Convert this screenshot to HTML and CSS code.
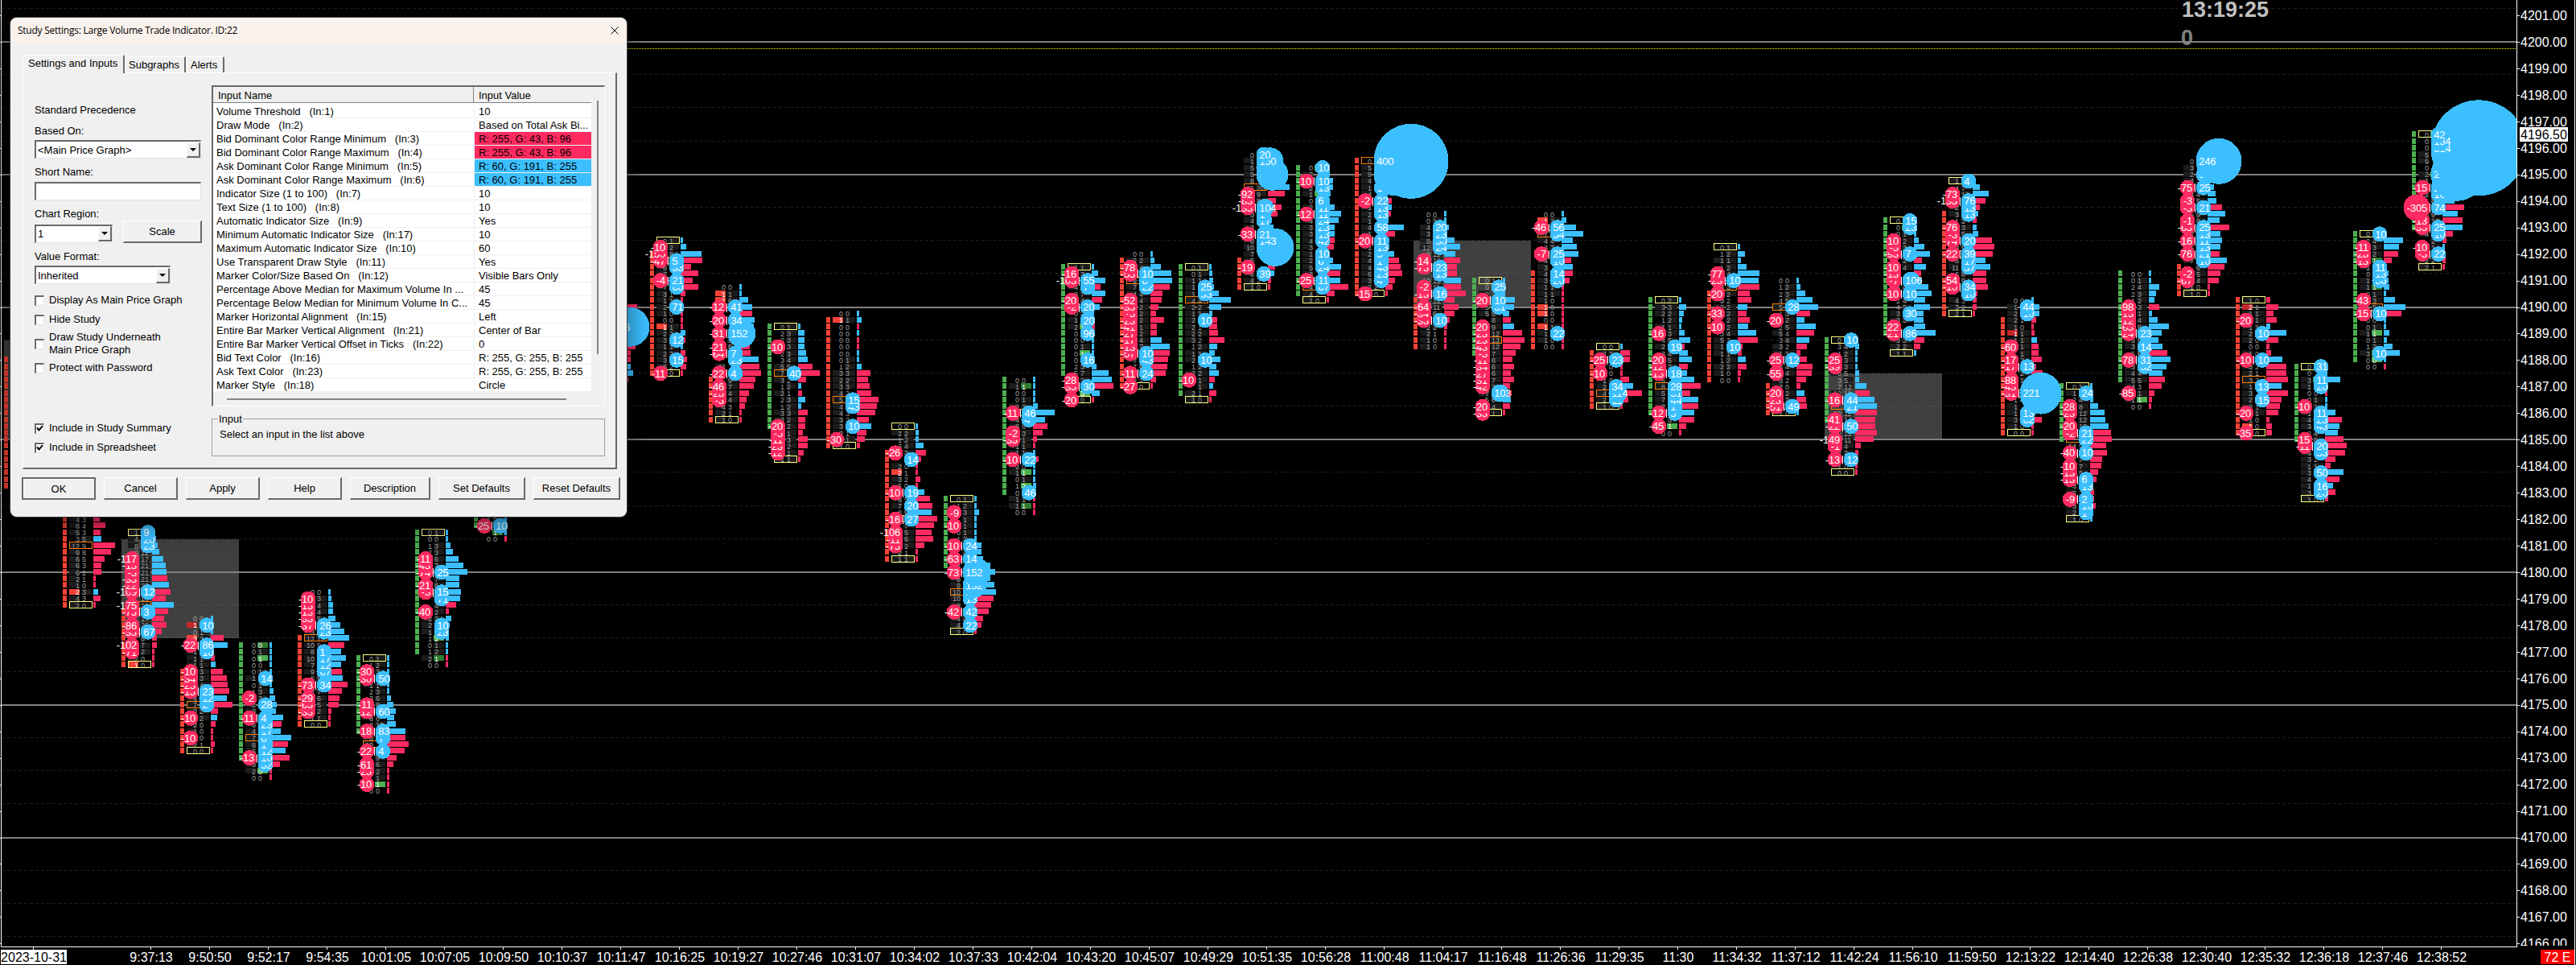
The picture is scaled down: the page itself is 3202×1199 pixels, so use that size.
FILE: index.html
```html
<!DOCTYPE html>
<html lang="en">
<head>
    <meta charset="UTF-8">
    <meta name="viewport" content="width=device-width, initial-scale=1.0">
    <title>Large Volume Trade Indicator</title>
    <link rel="stylesheet" href="styles.css">
</head>
<body>
    <svg id="chart" class="chart" width="3202" height="1199" viewBox="0 0 3202 1199"></svg>

    <div class="dialog">
        <div class="titlebar">
            <span class="dialog-title">Study Settings: Large Volume Trade Indicator. ID:22</span>
            <svg class="close" width="12" height="12" viewBox="0 0 12 12"><path d="M1.5 1.5l9 9M10.5 1.5l-9 9"/></svg>
        </div>

        <div class="tabs">
            <div class="tab active">Settings and Inputs</div>
            <div class="tab subgraphs">Subgraphs</div>
            <div class="tab alerts">Alerts</div>
        </div>

        <div class="panel">
            <div class="options">
                <div class="label">Standard Precedence</div>
                <div class="label based">Based On:</div>
                <div class="select wide"><span>&lt;Main Price Graph&gt;</span><i class="arrow"></i></div>
                <div class="label name">Short Name:</div>
                <div class="select wide"></div>
                <div class="label">Chart Region:</div>
                <div class="region">
                    <div class="select small"><span>1</span><i class="arrow"></i></div>
                    <div class="btn scale">Scale</div>
                </div>
                <div class="label format">Value Format:</div>
                <div class="select medium"><span>Inherited</span><i class="arrow"></i></div>
                <div class="checks">
                    <div class="check"><i class="box"></i>Display As Main Price Graph</div>
                    <div class="check"><i class="box"></i>Hide Study</div>
                    <div class="check tall"><i class="box"></i><span>Draw Study Underneath<br>Main Price Graph</span></div>
                    <div class="check"><i class="box"></i>Protect with Password</div>
                </div>
                <div class="checks bottom">
                    <div class="check"><i class="box"><svg width="9" height="9" viewBox="0 0 9 9"><path d="M1 3.5l2.5 3L8 1.2"/></svg></i>Include in Study Summary</div>
                    <div class="check"><i class="box"><svg width="9" height="9" viewBox="0 0 9 9"><path d="M1 3.5l2.5 3L8 1.2"/></svg></i>Include in Spreadsheet</div>
                </div>
            </div>

            <div class="inputs">
                <div class="list">
                    <div class="list-main">
                        <div class="list-head"><span>Input Name</span><span>Input Value</span></div>
                        <div class="list-body" id="inputs"></div>
                        <div class="hscroll"></div>
                    </div>
                    <div class="vscroll"></div>
                </div>
                <fieldset class="group">
                    <legend>Input</legend>
                    Select an input in the list above
                </fieldset>
            </div>
        </div>

        <div class="buttons">
            <div class="btn default">OK</div>
            <div class="btn">Cancel</div>
            <div class="btn">Apply</div>
            <div class="btn">Help</div>
            <div class="btn desc">Description</div>
            <div class="btn long">Set Defaults</div>
            <div class="btn long">Reset Defaults</div>
        </div>
    </div>

    <script src="chart.js"></script>
</body>
</html>
```

FILE: styles.css
```css
* {
    margin: 0;
    padding: 0;
    box-sizing: border-box;
}

body {
    background: #000;
    width: 3202px;
    height: 1199px;
    overflow: hidden;
    position: relative;
    font-family: 'Liberation Sans', Arial, sans-serif;
    font-size: 13px;
    color: #000;
}

/* chart */
.chart {
    display: block;
    shape-rendering: crispEdges;
}

.chart text {
    font-family: 'Liberation Sans', Arial, sans-serif;
}

.grid-major { stroke: #808080; stroke-width: 2; }
.grid-minor { stroke: #1e1e1e; stroke-width: 1; stroke-dasharray: 4 3; }
.grid-level { stroke: #ffff00; stroke-width: 1; stroke-dasharray: 1 1; }
.axis { stroke: #fff; stroke-width: 1; }
.session { fill: #808080; fill-opacity: 0.5; }

.axis-text { font-size: 16px; fill: #fff; }
.axis-text.dark { fill: #000; }
.axis-text.mid { text-anchor: middle; }

.clock { font-size: 27px; font-weight: bold; fill: #c0c0c0; }
.clock.count { fill: #808080; }

.up { fill: #4caf50; }
.down { fill: #f44336; }
.up-dark { fill: #2e7d32; }
.down-dark { fill: #c62828; }
.bid { fill: #ff2b60; }
.ask { fill: #3cbfff; }
.cell { fill: #1c1c1c; }
.high-low { fill: none; stroke: #ffff80; stroke-width: 1; }
.poc { fill: none; stroke: #ff8000; stroke-width: 1; }
.split { fill: #fff; }

.cell-text { font-size: 9px; fill: #a0a0a0; }
.cell-text.hot { fill: #fff; }
.mark-text { font-size: 13px; letter-spacing: -0.2px; fill: #fff; }
.end { text-anchor: end; }

/* study settings window */
.dialog {
    position: absolute;
    left: 13px;
    top: 22px;
    width: 766px;
    height: 620px;
    background: #f0f0f0;
    border-radius: 8px;
    overflow: hidden;
    box-shadow: 0 8px 32px rgba(0, 0, 0, 0.55), 0 0 0 1px #555;
}

.titlebar {
    height: 31px;
    background: #f9f1ec;
    display: flex;
    justify-content: space-between;
    align-items: center;
    padding: 0 9px;
}

.dialog-title {
    font-family: 'Open Sans', 'Noto Sans', sans-serif;
    font-size: 12px;
    letter-spacing: -0.25px;
    white-space: nowrap;
}

.close path {
    fill: none;
    stroke: #000;
    stroke-width: 1;
}

.tabs {
    display: flex;
    align-items: flex-end;
    height: 37px;
    padding-left: 15px;
}

.tab {
    height: 20px;
    padding: 2px 0 0 4px;
    border-top: 1px solid #fff;
    border-left: 1px solid #fff;
    border-right: 2px solid #696969;
    border-radius: 2px 2px 0 0;
    margin-right: 1px;
    white-space: nowrap;
}

.tab.active {
    height: 23px;
    width: 127px;
    padding-left: 6px;
    margin-bottom: -1px;
    margin-right: 0;
    background: #f0f0f0;
}

.subgraphs { width: 76px; }
.alerts { width: 47px; }

.panel {
    display: flex;
    height: 493px;
    margin: 0 12px 0 15px;
    border-top: 1px solid #fff;
    border-left: 1px solid #fff;
    border-right: 2px solid #696969;
    border-bottom: 2px solid #696969;
}

.options {
    width: 234px;
    padding: 38px 0 0 14px;
}

.label {
    height: 16px;
    line-height: 16px;
}

.label.based { margin: 10px 0 3px; }
.label.name { margin-bottom: 4px; }
.label.format { margin: 9px 0 3px; }
.select + .label { margin-top: 9px; }

.select {
    height: 23px;
    background: #fff;
    border: 1px solid #a0a0a0;
    border-top: 2px solid #696969;
    border-left: 2px solid #696969;
    border-right-color: #e3e3e3;
    border-bottom-color: #e3e3e3;
    display: flex;
    justify-content: space-between;
    align-items: center;
    padding-left: 2px;
}

.wide { width: 207px; }
.small { width: 97px; }
.medium { width: 169px; }

.arrow {
    width: 17px;
    height: 19px;
    background: #f0f0f0;
    border: 1px solid #fff;
    border-right: 2px solid #696969;
    border-bottom: 2px solid #696969;
    display: flex;
    align-items: center;
    justify-content: center;
}

.arrow::after {
    content: '';
    border: 4px solid transparent;
    border-top-color: #000;
    border-bottom: 0;
}

.region {
    display: flex;
    align-items: center;
    gap: 13px;
    height: 28px;
}

.region .select { margin-top: 4px; }

.btn {
    width: 92px;
    height: 28px;
    display: flex;
    align-items: center;
    justify-content: center;
    border: 1px solid #fff;
    border-right: 2px solid #696969;
    border-bottom: 2px solid #696969;
    white-space: nowrap;
}

.scale { width: 98px; }

.checks {
    display: flex;
    flex-direction: column;
    padding-top: 8px;
}

.check {
    display: flex;
    align-items: center;
    gap: 6px;
    height: 24px;
    line-height: 16px;
}

.check.tall { height: 36px; }
.checks.bottom { padding-top: 51px; }

.box {
    width: 12px;
    height: 13px;
    background: #fff;
    border: 1px solid #e3e3e3;
    border-top: 2px solid #696969;
    border-left: 2px solid #696969;
    display: flex;
    align-items: center;
    justify-content: center;
}

.box path {
    fill: none;
    stroke: #000;
    stroke-width: 2;
}

.inputs {
    width: 489px;
    padding-top: 15px;
}

.list {
    display: flex;
    height: 399px;
    border-top: 2px solid #696969;
    border-left: 2px solid #696969;
    border-right: 1px solid #fff;
    border-bottom: 1px solid #fff;
}

.list-main { width: 470px; }

.list-head,
.list-row {
    display: grid;
    grid-template-columns: 324px 146px;
}

.list-head {
    height: 20px;
    line-height: 21px;
    border-bottom: 1px solid #808080;
}

.list-head span { padding-left: 6px; }

.list-head span:first-child {
    height: 19px;
    border-right: 1px solid #808080;
}

.list-body {
    background: #fff;
    padding-top: 2px;
}

.list-row {
    height: 17px;
    line-height: 17px;
    border-bottom: 1px solid #f0f0f0;
    white-space: pre;
}

.list-row span {
    height: 16px;
    padding-left: 4px;
    overflow: hidden;
    text-overflow: ellipsis;
}

.list-row span:last-child {
    padding-left: 5px;
    border-left: 1px solid #f0f0f0;
}

.list-row .bid-color { background: #ff2b60; }
.list-row .ask-color { background: #3cbfff; }

.hscroll {
    width: 422px;
    height: 2px;
    background: #858585;
    margin: 8px 0 0 17px;
}

.vscroll {
    width: 2px;
    height: 315px;
    background: #858585;
    margin: 17px 0 0 7px;
}

.group {
    height: 54px;
    margin-top: 8px;
    border: 1px solid #a0a0a0;
    padding: 4px 0 0 9px;
}

.group legend {
    margin-left: -2px;
    padding: 0 1px;
}

.buttons {
    display: flex;
    gap: 10px;
    padding: 10px 0 0 14px;
}

.default {
    border: 2px solid #696969;
    box-shadow: inset 1px 1px #fff;
}

.desc { width: 100px; }
.long { width: 108px; }
```

FILE: chart.js
```js
// y of a tick row: row 0 is 4200.00, one row is 0.25
const ROW = 8.2375;
const yOf = row => 52 + row * ROW;
const xOf = k => 188 + 73 * k;

const svg = document.getElementById('chart');
const out = [];

function rect(x, y, w, h, cls) {
    out.push(`<rect x="${x}" y="${y}" width="${w}" height="${h}" class="${cls}"/>`);
}

function line(x1, y1, x2, y2, cls) {
    out.push(`<line x1="${x1}" y1="${y1}" x2="${x2}" y2="${y2}" class="${cls}"/>`);
}

function text(x, y, str, cls) {
    out.push(`<text x="${x}" y="${y}" class="${cls}">${str}</text>`);
}

const times = ['9:37:13', '9:50:50', '9:52:17', '9:54:35', '10:01:05', '10:07:05', '10:09:50', '10:10:37',
    '10:11:47', '10:16:25', '10:19:27', '10:27:46', '10:31:07', '10:34:02', '10:37:33', '10:42:04',
    '10:43:20', '10:45:07', '10:49:29', '10:51:35', '10:56:28', '11:00:48', '11:04:17', '11:16:48',
    '11:26:36', '11:29:35', '11:30', '11:34:32', '11:37:12', '11:42:24', '11:56:10', '11:59:50',
    '12:13:22', '12:14:40', '12:26:38', '12:30:40', '12:35:32', '12:36:18', '12:37:46', '12:38:52'];

// cells: "bid,ask" per row, R/r = red / dark red bid, G/g = green / dark green ask
// hist: b = ask dominant, r = bid dominant, width in px
// bids, asks: row:volume[:diameter]
const bars = [
    { k: -2, top: 48, stripe: ['down', 48, 67], cells: '', hist: '' },
    { k: -1, top: 71, stripe: ['down', 70, 85], orange: [76], yellow: [85],
      cells: '5,4 4,3 8,4 5,3 3,5 12,9 9,8 6,5 6,3 6,2 2,1 1,0 2,3R 4,3 2,0',
      hist: 'r9 r8 r15 r9 b10 r27 r22 r14 r10 r10 r3 r3 b6 r9 r3' },
    { k: 0, top: 74, stripe: ['down', 86, 94], orange: [85], yellow: [74, 94],
      cells: '1, 4, 8, 9,12 ,17 ,21 ,21 ,21 ,25 ,19 ,18 ,20 ,16 ,17 ,20 ,9 ,5 ,7 ,2 2,0 1,0R',
      hist: 'b4 b5 b7 b9 b14 b17 b18 r19 b21 r23 r17 b27 r20 r15 r18 r12 r6 r6 r3 r3 r3',
      bids: '78:117 79:13 80:3 81:33 82:22 83:109 85:175 86:73 88:86 89:33 91:102 92:71',
      asks: '74:9 75:20 76:23 83:12 86:3 89:67' },
    { k: 1, top: 87, stripe: ['down', 95, 107], orange: [100], yellow: [107],
      cells: '0,0 1,r 0,1 3,3R , 1, 1,1 1,1 ,3 ,3 ,4 4, 4, 7, 2,2 ,2 2,0 1,0 ,0 2,1 0,0',
      hist: 'b3 b3 b3 r16 b21 b4 r5 b6 r15 r20 r21 r23 b20 r27 r9 b8 r6 r3 r3 r5 r3',
      bids: '91:22 95:10 96:34 97:23 98:13 102:10 105:10',
      asks: '88:10 91:86 92:10 98:23 99:12 100:2' },
    { k: 2, top: 91, stripe: ['up', 91, 108], orange: [105], yellow: [],
      cells: '0,0g 0,1 0,1G 0,0 0,1 1, 0,1 1,3 ,3 2, 3, 5, 6, 4, 7, 8, 6, 7, 3, 2,0G 0,0',
      hist: 'b3 b3 b3 b3 b3 b3 b3 b5 b7 b9 b8 b17 r15 b14 b27 r23 b20 r25 r13 r3 r3',
      bids: '99:2 102:11 108:13',
      asks: '96:14 100:28 102:4 103:23 104:17 105:6 106:1 107:12 108:10 109:32' },
    { k: 3, top: 83, stripe: ['down', 90, 103], orange: [90], yellow: [103],
      cells: '0,0 ,3 ,4 ,4 ,5 , 3, 12,12 10,9 8, 10, 7, 9, 8,9 , 7,7 ,6 ,5 ,2 1,1 0,0',
      hist: 'b3 b4 b6 b6 b9 b15 b20 b26 r20 b16 b22 b16 r17 b18 r24 r17 r14 r13 r4 r3 r3',
      bids: '84:10 85:13 86:13 87:33 88:37 97:73 99:29 100:63 101:33',
      asks: '88:26 89:23 92:1 93:17 94:12 95:67 97:34' },
    { k: 4, top: 93, stripe: ['up', 93, 104], orange: [106], yellow: [93],
      cells: '0,1 1,2 ,3 ,2 1,1 2,3 3,6 ,8 ,7 8,6 8,10 ,9 3, 10, ,9 ,9 ,6 ,2 ,1 ,1G 0,0',
      hist: 'b3 b3 b3 b3 b3 b3 b5 b8 b11 b9 b11 b23 r23 r27 r22 r12 r8 r3 r3 r3 r3',
      bids: '95:30 96:30 100:11 101:12 104:18 107:22 109:61 110:23 112:10',
      asks: '96:50 101:60 104:83 105:7 107:4' },
    { k: 5, top: 74, stripe: ['up', 74, 92], orange: [], yellow: [74],
      cells: '0,1 0,0 1,3 2,3 ,6 ,7 , ,7 ,6 ,7 ,6 ,4 ,2 2,2 2, 1, 1,2G 0,1 1,2 2,1g 0,0',
      hist: 'b3 b3 b6 b9 b16 b22 b27 b17 b17 b19 b18 r13 r4 b7 b5 b4 b4 b3 b3 r3 r3',
      bids: '78:11 79:43 80:74 82:21 83:3 86:40',
      asks: '80:25 83:15 84:71 88:10 89:23' },
    { k: 6, top: 71, stripe: ['up', 71, 73],
      cells: '1,1 1,2 , ,1g 0,0', hist: 'b3 b3 b3 b3 r3', bids: '73:25', asks: '73:10' },
    { k: 8, top: 40, cells: '', hist: 'r19 b18 b18 b18 b18 b18 r17 r11 r11 b11 b14 r8', asks: '43:156:49' },
    { k: 9, top: 30, stripe: ['down', 32, 50], orange: [33], yellow: [30, 50],
      cells: '0,1 ,2 ,8 , 8,7 7, , 7,7 3,1 1,1 2, 1,0 0,0 1,1R 2,2 3, 1,1 2,2 3, 8,2 ,0',
      hist: 'b3 b7 b26 r27 r13 r22 r15 r22 r6 r3 r3 r3 r3 r3 b6 r6 b3 r6 r8 r7 r3',
      bids: '31:10 32:150 33:47 36:4 50:11',
      asks: '33:5 34:33 36:21 37:60 40:71 45:12 48:15' },
    { k: 10, top: 37, stripe: ['down', 51, 57], orange: [], yellow: [57],
      cells: '0,0 1,1R 1,6R , , , , , ,9 ,8 , , 11, , ,9 ,7 ,4 ,4 4,3 2,1 1,0',
      hist: 'b3 b3 b11 b16 r16 b19 b18 b17 r14 r13 r14 b24 r25 r27 r20 r18 r12 r9 r7 r3 r3',
      bids: '40:12 42:20 44:31 46:21 47:64 50:22 52:46 53:28 54:3',
      asks: '40:41 42:34 44:152:35 47:7 48:23 50:4' },
    { k: 11, top: 43, stripe: ['up', 43, 58], orange: [50], yellow: [43, 63],
      cells: '0,1 2,3 2,3 ,3 2,3 3,4 5,5 7, 3,2 1,2 2,1 2,3 1,2 3,3 2,2 ,2 ,1 ,3 ,2 ,1 1,1',
      hist: 'b3 b8 b8 b8 b10 b12 r18 r27 r10 b4 r5 b9 b4 r12 r9 r9 r6 r12 r12 r7 r3',
      bids: '46:10 58:20 59:5 60:11 61:23 62:12', asks: '50:40' },
    { k: 12, top: 41, stripe: ['down', 42, 61], orange: [54], yellow: [61],
      cells: '0,0 1,1R 0,0 0,0 0,0 0,0 0,0 0,1 1,2 3,3 2,2 3,3 4,2 5, 4, 4,3 3,2 3, 2,1 ,1 1,0',
      hist: 'b3 b6 r3 b3 r3 r3 b3 b3 b6 r17 r14 r16 r18 r27 r25 r23 r15 b18 r12 r10 r4',
      bids: '60:30', asks: '54:15 55:43 58:10' },
    { k: 13, top: 58, stripe: ['down', 62, 78], orange: [72], yellow: [58, 78],
      cells: '0,0 2,2 1,2 3,4 ,3 , 2,0 2,1R 3,2 1,0 , 8,5 7, 8,9 , ,7 ,5 ,6 ,2 2,1 1,1',
      hist: 'b3 b4 b4 b10 r13 r7 r3 r3 r6 r3 b11 r18 r21 b20 r27 r23 r20 r22 r11 r3 r3',
      bids: '62:26 68:10 72:16 74:106 75:11 76:73', asks: '63:14 68:19 70:20 72:27' },
    { k: 14, top: 69, stripe: ['up', 69, 79], orange: [83], yellow: [69, 89],
      cells: '0,1 1,2 ,3 ,1 ,1 0,1 1,2 , ,4 , 4, 7, 8, 9, 10, 10, 8, , 4,4 4,2 2,0',
      hist: 'b3 b3 b6 b3 b3 b3 b3 b9 b9 b11 b20 b26 b20 b25 b27 r24 r21 r18 r11 r9 r3',
      bids: '71:9 73:10 76:10 78:63 80:73 86:42',
      asks: '76:24 78:14 80:152:35 82:132:30 83:5 84:13 86:42 88:22' },
    { k: 15, top: 51, stripe: ['up', 51, 68], orange: [56], yellow: [],
      cells: '0,0 1,1g 0,0 0,1 2,2 , 4, 8,6 ,3 ,1 1,1 1,1 , 2,0 1,1G 0,1 1,2G 0, 1,1 1,1g 0,0',
      hist: 'b3 b3 b3 b3 b6 b27 b15 r18 r12 r5 r3 b3 r7 b3 b3 b3 b4 b3 r3 r3 r3',
      bids: '56:11 59:2 60:33 63:10', asks: '56:46 57:4 63:22 68:46' },
    { k: 16, top: 34, stripe: ['up', 34, 50], orange: [], yellow: [34, 54],
      cells: '1,1 2,3 , 4, 3,7 ,4 , 0,2 1, 2,1G 0, 0,0 0,1 0,1G 0, 2,3 5,7 ,2 ,9 ,3G ,0',
      hist: 'b3 b8 b17 r11 b17 r13 b10 b3 b4 r4 b4 b3 b3 b3 b3 b6 b21 b25 r27 b10 r3',
      bids: '35:16 36:103 39:20 40:2 51:28 52:33 54:20',
      asks: '36:55 37:7 40:20 42:20 44:96 48:16 52:30' },
    { k: 17, top: 32, stripe: ['down', 33, 52], orange: [36], yellow: [52],
      cells: '0,0 2,2 ,4 , 9, 7, 4,4 ,4 ,2 ,2 ,2 ,1 ,2 ,4 ,7 , 7, 7,8 , 2,2 ,0',
      hist: 'b3 b5 b13 b26 b27 r24 r15 r14 r10 r7 r17 r8 r8 b14 b24 r24 r22 r21 r19 r7 r3',
      bids: '34:78 35:53 39:52 40:33 41:3 42:23 43:41 44:27 45:17 46:13 47:57 50:11 52:27',
      asks: '35:10 36:6 37:22 47:10 48:43 50:24' },
    { k: 18, top: 34, stripe: ['up', 34, 53], orange: [39], yellow: [34, 54],
      cells: '0,1 0,1 1,1 1, 1, 4,4 2,2 1,1 2, 2,1 2,2 3,2 1,2 1,1 2, 1,2 2,2 ,1 ,1 2,1 1,0',
      hist: 'b3 b4 b5 b6 b12 b27 b15 b4 r10 r10 r11 r19 b10 b7 b14 b9 b12 r7 b5 r9 r3',
      bids: '51:10', asks: '37:25 38:35 42:10 48:10' },
    { k: 19, top: 17, stripe: ['down', 33, 37], orange: [22], yellow: [37],
      cells: '0, 1, 5, 9, 8, 15,20 ,9 ,8 , 3, 4, 3, , 8, 10, 7, 5, , 6, 4,2 1,0',
      hist: 'b3 b3 b5 b8 b10 b27 r21 r10 r17 r12 b5 b7 b9 b12 b20 b15 b9 r9 b8 r4 r3',
      bids: '23:92 24:83 25:133 29:33 34:19',
      asks: '17:20 18:150:34 19:130:32 20:172:40 25:104:22 26:1 27:17 29:21 30:143:33 31:188:47 35:39' },
    { k: 20, top: 19, stripe: ['up', 19, 38], orange: [37], yellow: [39],
      cells: '0,G 2, 3, 2, 1,G 0, 2, , 4, 3, 3, 4, 3, 1, 2, 5, 3, , 4, 4,2 1,0',
      hist: 'b3 b4 b8 b8 b5 b4 b10 b18 b15 b10 b10 r10 r9 b4 b8 b18 r17 b17 r27 r10 r3',
      bids: '21:10 26:12 36:25',
      asks: '19:10 21:10 22:13 24:6 25:11 26:11 27:24 28:23 29:13 30:42 32:10 33:6 34:24 36:11 37:67' },
    { k: 21, top: 18, stripe: ['down', 18, 38], orange: [18], yellow: [38],
      cells: '0, 5, 9, 4, 1, 4, , 1, 2, 1, 4, 1, , 1, 2, 4, 4, 6, 3, 2,2 ,0',
      hist: 'b3 b3 b3 b3 b3 b3 r8 b8 r7 b4 b23 r12 b5 b5 b11 r17 r19 r21 r12 r9 r3',
      bids: '24:2 30:20 38:15',
      asks: '18:400:93 20:203:53 22:13 24:22 25:13 26:13 28:58 30:11 31:13 32:5 33:1 34:46 35:23 36:4' },
    { k: 22, top: 26, stripe: ['down', 39, 46], orange: [], yellow: [],
      cells: '0,0 0,1 4, 3, 8, 12, 9,11 ,12 , ,9 10,12 ,11 , ,12 ,11 ,6 , 2,2 2,1 1,0 1,0',
      hist: 'b3 b3 b6 b4 b13 b20 b14 r20 r16 r16 b21 r21 r27 r13 r18 r13 r7 r4 r3 r3 r3',
      bids: '33:14 34:73 37:2 38:13 40:64 41:34 42:33',
      asks: '28:20 29:23 30:30 31:24 34:23 35:13 38:16 42:10' },
    { k: 23, top: 36, stripe: ['up', 36, 47], orange: [45], yellow: [36, 56],
      cells: '0,1 0, 2, , 5, 5,5 ,8 ,9 ,12 ,13 ,12 ,7 ,8 ,6 ,6 ,7 ,3 7, 5,6 ,4 ,1',
      hist: 'b3 b3 b3 b15 b14 b8 r10 b14 r24 r27 r22 r16 r12 r14 r10 r14 r9 r11 b10 r9 r3',
      bids: '39:20 43:20 44:23 45:23 46:43 47:3 48:11 49:34 50:27 51:31 52:42 55:20 56:33',
      asks: '37:25 39:10 40:31 53:103:22' },
    { k: 24, top: 26, stripe: ['down', 35, 46], orange: [29], yellow: [],
      cells: '0,0 1,2R , 7, 4,4 3,7 , 4, 3, 4, 3, 1,1 1,1 1,0 1,0R 1,0R 0,0 1,1R 1, 1,0 0,0',
      hist: 'b3 b6 b18 b27 b14 b19 b21 r12 b14 r14 r10 r3 r3 r3 r3 r3 r3 r3 r3 r3 r3',
      bids: '28:46 32:7', asks: '28:56 29:34 32:25 33:10 35:14 36:20 44:22' },
    { k: 25, top: 46, stripe: ['down', 47, 55], orange: [53], yellow: [46, 55],
      cells: '0,0 2,2 , 1,0 ,0 1,0 2,1 4, 2, 1,0',
      hist: 'b3 r12 r12 r3 r3 r11 b16 r27 r10 r3',
      bids: '48:25 50:10', asks: '48:23 52:34 53:114:23 54:11' },
    { k: 26, top: 39, stripe: ['up', 39, 56], orange: [52], yellow: [39],
      cells: '0,2 3,3 2,2 1,2 1,1 ,3 4,5 2, 3,4 ,5 ,2 , 5, 8, 5, 7, 7, , ,3 ,1G 0,0',
      hist: 'b3 b9 b6 b4 b3 b7 b14 r7 b11 b16 r11 b10 b19 r27 r14 b24 r24 b19 r19 r9 r3',
      bids: '44:16 48:20 49:12 50:13 56:12 58:45',
      asks: '46:19 50:18 52:28 53:31 54:44 55:1 56:3' },
    { k: 27, top: 31, stripe: ['down', 38, 51], orange: [37], yellow: [31],
      cells: '0,1 1,2 1,1 1,2 ,4 , 3,3 ,2 3,2 2,2 ,2 ,2 ,2 3,4 5,3 1, 1,1 1,2 2,2 1,0 0,0',
      hist: 'b3 b9 b4 b11 b27 b26 r27 r15 r17 b12 r11 r15 b13 b23 r25 r6 r5 b10 r11 r4 r3',
      bids: '35:77 36:23 38:20 41:33 43:10', asks: '36:10 46:10' },
    { k: 28, top: 36, stripe: ['down', 52, 56], orange: [40], yellow: [56],
      cells: '0,0 1,2 2,3 4,5 5, 1,3 ,2 2,5 5,4 3,4 3,2 1,1 , 4,4 ,4 3,2 2,0 ,2 ,2 , 1,0',
      hist: 'b3 b5 b11 b20 b27 r17 b10 b24 r22 b16 r13 r5 r13 r20 r19 r12 r5 b10 r12 r13 b3',
      bids: '42:20 48:25 50:55 53:20 54:23 55:51', asks: '40:28 48:12 55:49' },
    { k: 29, top: 45, stripe: ['up', 45, 57], orange: [55], yellow: [45, 65],
      cells: '0, 3,4 1,2 ,3 ,3 6,5 3,5 7,12 12,11 , , 10,11 ,14 , 12,12 ,11 ,4 2,2 , 1,0 0,0',
      hist: 'b3 b5 b3 b3 b3 b5 b5 b14 r18 b24 b27 r27 r25 r25 r27 r23 r7 r4 r3 r3 r3',
      bids: '48:25 49:39 54:16 57:41 58:22 60:149 61:1 63:13',
      asks: '45:10 54:44 55:21 58:50 63:12' },
    { k: 30, top: 27, stripe: ['up', 27, 44], orange: [], yellow: [27, 47],
      cells: '0, 0,G 0,1 ,2 ,3 , ,2 ,4 , , 3,4 , 2,4 4,5 3, 3,3 , , 3,3 2,2 1,1',
      hist: 'b3 b3 b3 b6 b13 b20 r10 b15 r9 b10 b18 b22 b14 b20 b12 b12 b14 b27 r13 r8 b3',
      bids: '30:10 31:3 32:93 34:10 35:13 36:7 38:10 43:22 44:21',
      asks: '27:15 28:23 32:7 36:106:22 38:10 41:30 44:86' },
    { k: 31, top: 21, stripe: ['down', 26, 41], orange: [32], yellow: [21, 41],
      cells: '1, 4,7 ,12 , 2, 3, 1,2 ,3 ,5 , 9,9 , 5, 11, 6,8 ,9 , , 4,3 3,2 2,1',
      hist: 'b3 b9 b20 r16 r9 b7 r5 b5 b7 r24 r27 r25 b16 b22 r17 r17 r19 r6 r5 r5 r3',
      bids: '23:73 24:133 28:76 29:3 30:74 32:22 36:54 37:10',
      asks: '21:4 24:76 25:13 26:13 30:20 32:39 33:17 34:37 37:34 38:10' },
    { k: 32, top: 39, stripe: ['down', 42, 59], orange: [53], yellow: [59],
      cells: '0,0 1, 2, 2,1 1,0 1,1r 1,1 ,1 ,1 ,2 , 1,2 ,1 , , 1,4 1, 1, 3, 1,0 0,0',
      hist: 'b3 b10 b10 r6 r3 r4 b7 r9 r9 r13 r6 r14 r12 r10 b10 b10 b6 b5 r13 r3 r3',
      bids: '46:60 48:17 49:17 51:88 52:43 53:31',
      asks: '40:44 41:10 49:13 53:221:52 56:13 57:62' },
    { k: 33, top: 52, stripe: ['up', 52, 60], orange: [60], yellow: [52, 72],
      cells: '0,1 1, 2,4 ,8 ,12 ,12 ,10 , , 14,9 , 7,7 ,7 ,5 10, 3, 5,3 , 3, 2, 1,0',
      hist: 'b3 b4 b4 b10 b18 b19 b23 r26 r27 r20 r21 r15 r14 r10 r8 r3 r5 r5 r7 b4 b3',
      bids: '55:28 56:23 58:20 59:2 62:40 64:10 65:13 66:13 69:9',
      asks: '53:24 59:21 60:22 62:10 66:6 67:13 69:2 70:10 71:1' },
    { k: 34, top: 35, stripe: ['up', 35, 51], orange: [], yellow: [],
      cells: '0,0 0,1 2,4 2,3 1,2 ,3 ,1 ,4 ,8 , 5,5 3, 5,8 , 3, 4,4 5,5 4,3 ,1 1,1G 0,0',
      hist: 'b3 b3 b13 b9 b7 r13 b4 b11 b25 b16 b12 b17 r23 b27 b22 b17 r20 r16 r7 r4 r3',
      bids: '40:98 41:13 42:12 43:63 44:24 48:78 53:85', asks: '44:23 46:14 48:31 49:52' },
    { k: 35, top: 18, stripe: ['down', 34, 38], orange: [], yellow: [38],
      cells: '0, 3, 2, 4,3 , 4,4 ,5 , 6,9 ,8 , 7,7 , 5,6 , 7,7 ,6 ,5 ,4 1,0 1,0',
      hist: 'b3 b3 b3 b4 b8 b10 b11 r18 b22 b15 r27 b16 b18 b16 r15 b24 r21 r16 r14 r3 r3',
      bids: '22:75 24:3 25:3 27:1 28:63 30:16 32:76 35:2 36:67',
      asks: '18:246:57 20:17 22:25 25:21 28:25 29:13 30:11 31:13 32:21 33:10' },
    { k: 36, top: 39, stripe: ['down', 39, 59], orange: [51], yellow: [39, 59],
      cells: '1,0 2,1r 1,1 ,1 1,1 2, 2,0 0,0 1,0 , 3,2 2,1 3,2 1, 3, 2, 2,1 ,1 1,0 1,0R ,0',
      hist: 'r5 r15 r9 r13 b5 b25 r15 r4 r6 b20 r25 r25 r27 b19 r27 r19 r17 r15 r4 r7 r7',
      bids: '42:20 48:10 56:20 59:35', asks: '44:10 48:10 52:13 54:15' },
    { k: 37, top: 49, stripe: ['up', 49, 60], orange: [], yellow: [49, 69],
      cells: '0, 0, 3,G 1, 0,0 0,1 ,1 1, 4, 3, 2,4 ,8 , 6, 3,2 1,1 3, 4, 1, 3, 1,0',
      hist: 'b3 b3 b19 b4 r3 b3 b3 b13 r21 b18 b16 r23 r27 r25 r13 r7 b23 r18 b10 r13 r4',
      bids: '55:10 60:15 61:11',
      asks: '49:31 51:11 52:20 56:11 57:23 58:43 61:20 62:33 65:50 67:16 68:20' },
    { k: 38, top: 29, stripe: ['up', 29, 48], orange: [40], yellow: [29],
      cells: '0, 2,4 ,3 ,2 ,1g 1, 0, 1, 1,1g 0,1 ,3 ,5 , 0,0 0,1 1,1G 0,1 1,2 3,G 0,0G 0,0',
      hist: 'b4 b24 b19 r18 r10 b3 b6 b6 b7 b3 b14 b27 r22 b3 b3 b7 b4 b11 b20 b3 r3',
      bids: '31:11 32:28 33:13 39:43 41:15', asks: '29:10 34:11 35:13 36:36 41:10 47:10' },
    { k: 39, top: 14, stripe: ['up', 14, 28], orange: [], yellow: [14, 34],
      cells: '0,G 0, 0, 5, 9, 0, 2,G 1, , 2, 6,8 , 8,9 ,10 ,7 4, ,2 ,1 , 2,2 2,1',
      hist: 'b3 b3 b3 b3 b3 b3 b3 b3 b3 b5 b15 r27 b19 r25 b25 r13 r5 b3 b3 r4 r3',
      bids: '22:15 25:305:33 27:13 28:33 31:10 32:3',
      asks: '14:42 15:134:24 16:514:119 20:270:66 22:21 23:16 25:74 28:25 29:10 32:22' }
];

function parseMarks(str) {
    return (str || '').split(' ').filter(Boolean).map(m => {
        const [row, vol, size] = m.split(':');
        return { row: +row, vol, size: +(size || 19) };
    });
}

function drawGrid() {
    for (let row = -5; row < 136; row += 5) {
        const y = Math.round(yOf(row));
        if (row % 20 === 0) {
            line(2, y, 3129, y, 'grid-major');
        } else {
            line(2, y - 0.5, 3129, y - 0.5, 'grid-minor');
        }
    }
    line(770, 60.5, 3129, 60.5, 'grid-level');

    [[5, 45, 150, 60], [151, 75, 146, 90], [1757, 30, 146, 40], [2268, 50, 146, 60]].forEach(([x, from, w, to]) => {
        rect(x, yOf(from), w, yOf(to) - yOf(from), 'session');
    });
}

function drawBar(bar) {
    const x = xOf(bar.k);

    if (bar.stripe) {
        const [cls, from, to] = bar.stripe;
        for (let row = from; row <= to; row++) {
            rect(x - 37, Math.round(yOf(row) - 4), 5, 7, cls);
        }
    }

    bar.cells.split(' ').filter(Boolean).forEach((cell, i) => {
        const y = yOf(bar.top + i);
        const top = Math.round(y - 4);
        const mark = (cell.match(/[RrGg]/) || [''])[0];
        const [bid, ask] = cell.replace(/[RrGg]/, '').split(',');
        if (bid !== '' && +bid > 0 && +bid >= +ask) rect(x - 29, top, 13, 7, 'cell');
        if (ask !== '' && +ask > 0 && +ask >= +bid) rect(x - 14, top, 13, 7, 'cell');
        if (mark === 'R' || mark === 'r') rect(x - 29, top, 13, 7, mark === 'R' ? 'down' : 'down-dark');
        if (mark === 'G' || mark === 'g') rect(x - 14, top, 13, 7, mark === 'G' ? 'up' : 'up-dark');
        text(x - 16, y + 3.5, bid, 'cell-text end' + (/[Rr]/.test(mark) ? ' hot' : ''));
        text(x - 13, y + 3.5, ask, 'cell-text' + (/[Gg]/.test(mark) ? ' hot' : ''));
    });

    (bar.yellow || []).forEach(row => rect(x - 28.5, Math.round(yOf(row)) - 4.5, 28, 8, 'high-low'));
    (bar.orange || []).forEach(row => rect(x - 28.5, Math.round(yOf(row)) - 4.5, 28, 8, 'poc'));

    bar.hist.split(' ').filter(Boolean).forEach((h, i) => {
        rect(x + 1, Math.round(yOf(bar.top + i) - 4), h.slice(1), 7, h[0] === 'b' ? 'ask' : 'bid');
    });
}

function drawMarks(bar) {
    const x = xOf(bar.k);
    const bids = parseMarks(bar.bids);
    const asks = parseMarks(bar.asks);

    // lower prices first, so the higher ones cover them
    bids.reverse().forEach(m => {
        const y = yOf(m.row);
        out.push(`<circle cx="${x - 14.5 - m.size / 2}" cy="${y}" r="${m.size / 2}" class="bid"/>`);
        text(x - 18, y + 4.7, '-' + m.vol, 'mark-text end');
    });
    asks.reverse().forEach(m => {
        const y = yOf(m.row);
        out.push(`<circle cx="${x - 13.5 + m.size / 2}" cy="${y}" r="${m.size / 2}" class="ask"/>`);
        text(x - 9.7, y + 4.7, m.vol, 'mark-text');
        if (bids.some(b => b.row === m.row)) rect(x - 15, Math.round(y) - 5, 1, 11, 'split');
    });
}

function drawAxes() {
    // everything right of the price scale hides marker overflow
    out.push('<rect x="3129" y="0" width="73" height="1199" fill="#000"/>');
    for (let p = 4201; p >= 4166; p--) {
        const y = yOf((4200 - p) * 4);
        text(3133, y + 5.7, p + '.00', 'axis-text');
        line(3129, Math.round(y) + 0.5, 3132, Math.round(y) + 0.5, 'axis');
        line(0, Math.round(y) + 0.5, 1, Math.round(y) + 0.5, 'axis');
    }
    out.push('<rect x="0" y="1175" width="3202" height="24" fill="#000"/>');
    out.push('<rect x="3132" y="158" width="60" height="18" fill="#fff"/>');
    text(3133, 172.7, '4196.50', 'axis-text dark');

    line(1.5, 0, 1.5, 1176, 'axis');
    line(3128.5, 0, 3128.5, 1177, 'axis');
    line(3200.5, 0, 3200.5, 1199, 'axis');
    line(1, 1176.5, 3129, 1176.5, 'axis');

    line(41.5, 1177, 41.5, 1180, 'axis');
    out.push('<rect x="1" y="1180" width="82" height="18" fill="#fff"/>');
    text(42, 1194.7, '2023-10-31', 'axis-text dark mid');
    times.forEach((t, k) => {
        line(xOf(k) - 0.5, 1177, xOf(k) - 0.5, 1180, 'axis');
        text(xOf(k), 1194.7, t, 'axis-text mid');
    });
    out.push('<rect x="3158" y="1180" width="42" height="18" fill="#f00"/>');
    text(3179, 1194.7, '72 E', 'axis-text mid');
}

drawGrid();
bars.forEach(drawBar);
bars.forEach(drawMarks);
text(2712, 21, '13:19:25', 'clock');
text(2711, 56, '0', 'clock count');
drawAxes();
svg.innerHTML = out.join('');

const inputs = [
    ['Volume Threshold   (In:1)', '10'],
    ['Draw Mode   (In:2)', 'Based on Total Ask Bi...'],
    ['Bid Dominant Color Range Minimum   (In:3)', 'R: 255, G: 43, B: 96', 'bid-color'],
    ['Bid Dominant Color Range Maximum   (In:4)', 'R: 255, G: 43, B: 96', 'bid-color'],
    ['Ask Dominant Color Range Minimum   (In:5)', 'R: 60, G: 191, B: 255', 'ask-color'],
    ['Ask Dominant Color Range Maximum   (In:6)', 'R: 60, G: 191, B: 255', 'ask-color'],
    ['Indicator Size (1 to 100)   (In:7)', '10'],
    ['Text Size (1 to 100)   (In:8)', '10'],
    ['Automatic Indicator Size   (In:9)', 'Yes'],
    ['Minimum Automatic Indicator Size   (In:17)', '10'],
    ['Maximum Automatic Indicator Size   (In:10)', '60'],
    ['Use Transparent Draw Style   (In:11)', 'Yes'],
    ['Marker Color/Size Based On   (In:12)', 'Visible Bars Only'],
    ['Percentage Above Median for Maximum Volume In ...', '45'],
    ['Percentage Below Median for Minimum Volume In C...', '45'],
    ['Marker Horizontal Alignment   (In:15)', 'Left'],
    ['Entire Bar Marker Vertical Alignment   (In:21)', 'Center of Bar'],
    ['Entire Bar Marker Vertical Offset in Ticks   (In:22)', '0'],
    ['Bid Text Color   (In:16)', 'R: 255, G: 255, B: 255'],
    ['Ask Text Color   (In:23)', 'R: 255, G: 255, B: 255'],
    ['Marker Style   (In:18)', 'Circle']
];

document.getElementById('inputs').innerHTML = inputs.map(([name, value, cls]) =>
    `<div class="list-row"><span>${name}</span><span class="${cls || ''}">${value}</span></div>`
).join('');
```
